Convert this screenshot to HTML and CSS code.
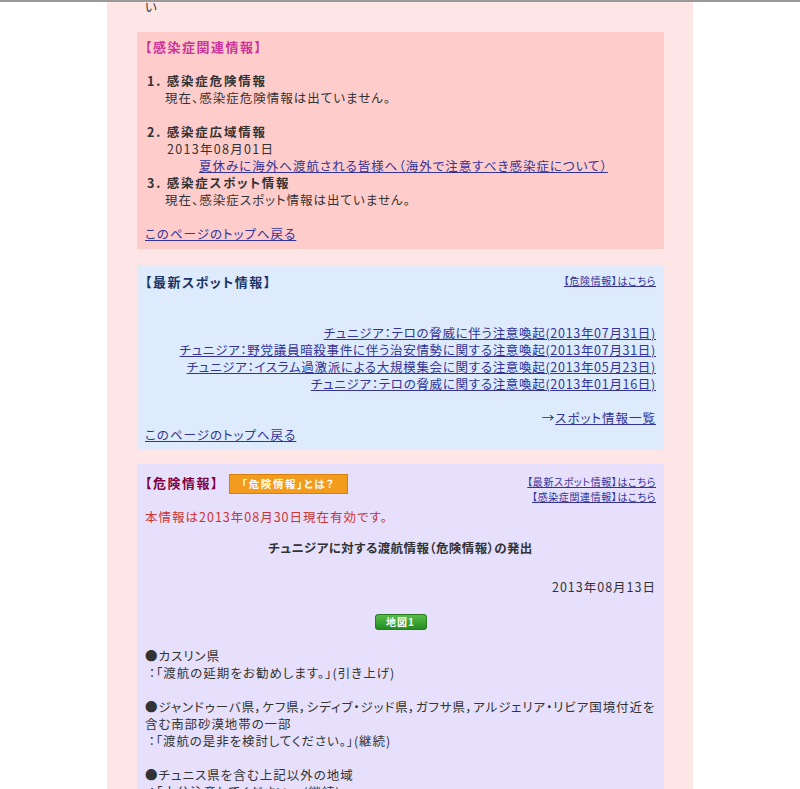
FILE: index.html
```html
<!DOCTYPE html>
<html lang="ja">
   <head>
      <meta charset="UTF-8">
      <title>チュニジア 安全情報</title>
      <link rel="stylesheet" href="styles.css">
   </head>
   <body>
      <div class="page">
         <p class="tail">い</p>

         <!-- infection info -->
         <div class="box infect">
            <h2 class="head head-infect">【感染症関連情報】</h2>
            <dl class="infect-list">
               <dt>1. 感染症危険情報</dt>
               <dd>現在、感染症危険情報は出ていません。</dd>
               <dt class="gap">2. 感染症広域情報</dt>
               <dd class="date">2013年08月01日</dd>
               <dd class="item"><a href="#">夏休みに海外へ渡航される皆様へ（海外で注意すべき感染症について）</a></dd>
               <dt>3. 感染症スポット情報</dt>
               <dd>現在、感染症スポット情報は出ていません。</dd>
            </dl>
            <p class="back"><a href="#">このページのトップへ戻る</a></p>
         </div>

         <!-- spot info -->
         <div class="box spot">
            <div class="head-row">
               <h2 class="head head-spot">【最新スポット情報】</h2>
               <div class="side-links">
                  <a href="#">【危険情報】はこちら</a>
               </div>
            </div>
            <ul class="spot-list">
               <li><a href="#">チュニジア：テロの脅威に伴う注意喚起(2013年07月31日)</a></li>
               <li><a href="#">チュニジア：野党議員暗殺事件に伴う治安情勢に関する注意喚起(2013年07月31日)</a></li>
               <li><a href="#">チュニジア：イスラム過激派による大規模集会に関する注意喚起(2013年05月23日)</a></li>
               <li><a href="#">チュニジア：テロの脅威に関する注意喚起(2013年01月16日)</a></li>
            </ul>
            <p class="more">→<a href="#">スポット情報一覧</a></p>
            <p class="back"><a href="#">このページのトップへ戻る</a></p>
         </div>

         <!-- danger info -->
         <div class="box danger">
            <div class="head-row">
               <div class="head-left">
                  <h2 class="head head-danger">【危険情報】</h2>
                  <a class="what-btn" href="#">「危険情報」とは？</a>
               </div>
               <div class="side-links">
                  <a href="#">【最新スポット情報】はこちら</a>
                  <a href="#">【感染症関連情報】はこちら</a>
               </div>
            </div>
            <p class="valid">本情報は2013年08月30日現在有効です。</p>
            <h3 class="title">チュニジアに対する渡航情報（危険情報）の発出</h3>
            <p class="issued">2013年08月13日</p>
            <div class="map-row"><a class="map-btn" href="#">地図1</a></div>
            <div class="area">
               <p>●カスリン県<br>&nbsp;：「渡航の延期をお勧めします。」(引き上げ)</p>
               <p class="wide">●ジャンドゥーバ県，ケフ県，シディブ・ジッド県，ガフサ県，アルジェリア・リビア国境付近を<br>含む南部砂漠地帯の一部<br>&nbsp;：「渡航の是非を検討してください。」(継続)</p>
               <p>●チュニス県を含む上記以外の地域<br>&nbsp;：「十分注意してください。」(継続)</p>
            </div>
         </div>
      </div>
   </body>
</html>
```

FILE: styles.css
```css
       /* page frame */
       body {
       margin: 0;
       background-color: #fff;
       border-top: 2px solid #9a9a9a;
       font-family: "Noto Sans CJK JP", "Noto Sans", sans-serif;
       font-size: 12.5px;
       line-height: 17px;
       letter-spacing: 1px;
       color: #333;
       font-feature-settings: "palt";
       }
       p, h2, h3, ul, dl, dd {
       margin: 0;
       padding: 0;
       }
       a {
       color: #333399;
       }
       .page {
       width: 527px;
       margin: 0 auto;
       padding: 0 29px 10px 30px;
       background-color: #ffe6e6;
       }
       .tail {
       margin-top: -4px;
       padding-left: 8px;
       }
       /* coloured boxes */
       .box {
       margin-top: 17px;
       padding: 6px 8px 7px 8px;
       }
       .infect {
       background-color: #ffcccc;
       }
       .spot {
       margin-top: 16px;
       padding-top: 8px;
       background-color: #ddebfc;
       }
       .danger {
       margin-top: 14px;
       padding-top: 10px;
       background-color: #e6e0fc;
       }
       .head {
       font-size: 13px;
       font-weight: bold;
       letter-spacing: 1.5px;
       }
       .head-infect {
       color: #cc3399;
       margin-bottom: 17px;
       }
       .head-spot {
       color: #1a3366;
       }
       .head-danger {
       color: #800040;
       }
       .head-row {
       display: flex;
       justify-content: space-between;
       align-items: flex-start;
       }
       .head-left {
       display: flex;
       align-items: flex-start;
       gap: 10px;
       }
       .side-links {
       display: flex;
       flex-direction: column;
       align-items: flex-end;
       font-size: 10px;
       line-height: 15px;
       letter-spacing: 0.6px;
       }
       /* infection list */
       .infect-list dt {
       font-weight: bold;
       padding-left: 2px;
       letter-spacing: 1.8px;
       }
       .infect-list dd {
       padding-left: 20px;
       }
       .infect-list dt.gap {
       margin-top: 17px;
       }
       .infect-list dd.date {
       padding-left: 22px;
       letter-spacing: 1.3px;
       }
       .infect-list dd.item {
       padding-left: 54px;
       }
       .back {
       margin-top: 17px;
       }
       /* spot list */
       .spot-list {
       list-style: none;
       margin-top: 34px;
       text-align: right;
       letter-spacing: 0.7px;
       }
       .more {
       margin-top: 17px;
       text-align: right;
       }
       .spot .back {
       margin-top: 0;
       }
       /* danger info */
       .what-btn {
       display: block;
       width: 117px;
       height: 18px;
       line-height: 18px;
       text-align: center;
       font-size: 10.5px;
       font-weight: bold;
       letter-spacing: 1.6px;
       color: #fff;
       text-decoration: none;
       background-color: #f39b1c;
       border: 1px solid #d9800c;
       }
       .valid {
       color: #cc3333;
       margin-top: 4px;
       }
       .title {
       margin-top: 14px;
       text-align: center;
       font-size: 12.5px;
       font-weight: bold;
       letter-spacing: 0.4px;
       }
       .issued {
       margin-top: 22px;
       text-align: right;
       }
       .map-row {
       margin-top: 17px;
       text-align: center;
       }
       .map-btn {
       display: inline-block;
       width: 52px;
       height: 16px;
       line-height: 16px;
       border-radius: 4px;
       font-size: 10px;
       font-weight: bold;
       color: #fff;
       text-decoration: none;
       background: linear-gradient(#5cbf4a, #1f8a1f);
       box-shadow: inset 0 0 0 1px #2a7a22;
       }
       .area {
       margin-top: 17px;
       }
       .area p {
       margin-bottom: 17px;
       }
       .area .wide {
       letter-spacing: 0.9px;
       }
```
